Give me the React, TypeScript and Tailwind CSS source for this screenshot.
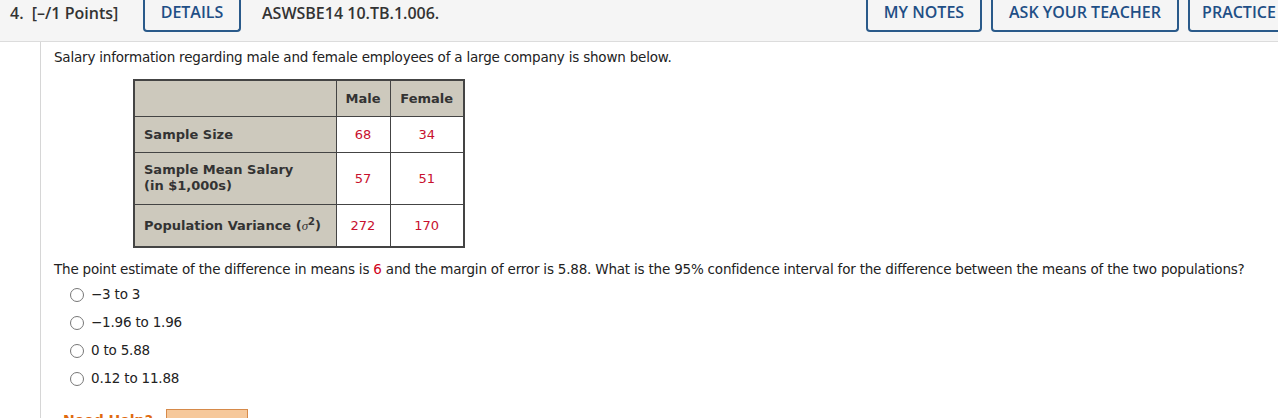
import React from "react";

const head = "font-['Open_Sans',sans-serif]";
const body = "font-['DejaVu_Sans',Verdana,sans-serif]";

const NavBtn = ({ label, className = "" }: { label: string; className?: string }) => (
  <div
    className={`flex shrink-0 items-end justify-center h-[33px] -mt-[1px] border-2 border-t-0 border-[#2a5a8a] rounded-b-[4px] pb-[6px] text-[#1f4f86] text-[16px] font-semibold whitespace-nowrap ${className}`}
  >
    {label}
  </div>
);

const options = ["\u22123 to 3", "\u22121.96 to 1.96", "0 to 5.88", "0.12 to 11.88"];

export default function App() {
  return (
    <div className="w-[1278px] h-[418px] overflow-hidden bg-white">
      <div className={`flex items-start h-[42px] overflow-hidden bg-[#f5f5f5] border-b border-[#dcdcdc] text-[#333] ${head}`}>
        <div className="shrink-0 pl-[10px] pt-[1px] text-[16px] font-semibold w-[143px] whitespace-nowrap">
          4.&nbsp;&nbsp;[–/1 Points]
        </div>
        <NavBtn label="DETAILS" className="w-[98px]" />
        <div className="pl-[21px] pt-[1px] text-[16px] font-semibold whitespace-nowrap">ASWSBE14 10.TB.1.006.</div>
        <div className="flex-1" />
        <div className="flex gap-[9px] mr-[-92px]">
          <NavBtn label="MY NOTES" className="w-[116px]" />
          <NavBtn label="ASK YOUR TEACHER" className="w-[188px]" />
          <NavBtn label="PRACTICE ANOTHER" className="w-[182px]" />
        </div>
      </div>
      <div className="ml-[40px] border-l border-[#d6d6d6] h-[376px] pl-[13px] pt-[5px]">
        <div className={`text-[13.5px] text-[#222] ${body} tracking-[-0.2px]`}>
          Salary information regarding male and female employees of a large company is shown below.
        </div>
        <table className={`ml-[79px] mt-[12px] border-collapse border-2 border-[#444] text-[13px] font-bold ${body} text-[#333]`}>
          <tbody>
            <tr className="h-[36px] bg-[#cdc9bd]">
              <td className="w-[202px] border border-[#444]"></td>
              <td className="w-[54px] border border-[#444] text-center">Male</td>
              <td className="w-[74px] border border-[#444] text-center">Female</td>
            </tr>
            <tr className="h-[36px]">
              <td className="bg-[#cdc9bd] border border-[#444] px-[9px]">Sample Size</td>
              <td className="border border-[#444] text-center text-[#c8102e] font-normal">68</td>
              <td className="border border-[#444] text-center text-[#c8102e] font-normal">34</td>
            </tr>
            <tr className="h-[52px]">
              <td className="bg-[#cdc9bd] border border-[#444] px-[9px] leading-[16px]">
                Sample Mean Salary
                <br />
                (in $1,000s)
              </td>
              <td className="border border-[#444] text-center text-[#c8102e] font-normal">57</td>
              <td className="border border-[#444] text-center text-[#c8102e] font-normal">51</td>
            </tr>
            <tr className="h-[43px]">
              <td className="bg-[#cdc9bd] border border-[#444] px-[9px] whitespace-nowrap">
                Population Variance (<span className="font-normal italic font-['Liberation_Serif',serif]">σ</span>
                <sup className="text-[10px]">2</sup>)
              </td>
              <td className="border border-[#444] text-center text-[#c8102e] font-normal">272</td>
              <td className="border border-[#444] text-center text-[#c8102e] font-normal">170</td>
            </tr>
          </tbody>
        </table>
        <div className={`mt-[11px] text-[13.5px] text-[#222] ${body} tracking-[-0.2px]`}>
          The point estimate of the difference in means is <span className="text-[#d0021b]">6</span> and the margin of
          error is 5.88. What is the 95% confidence interval for the difference between the means of the two
          populations?
        </div>
        <div className={`mt-[6px] flex flex-col gap-[10px] pl-[16px] text-[13.5px] text-[#222] ${body} tracking-[-0.2px]`}>
          {options.map((o) => (
            <label key={o} className="flex items-center gap-[7px] h-[18px]">
              <span className="w-[14px] h-[14px] rounded-full border border-[#777] bg-white" />
              <span>{o}</span>
            </label>
          ))}
        </div>
        <div className={`mt-[21px] flex items-start gap-[13px] pl-[9px] ${body}`}>
          <span className="text-[#e06a10] font-bold text-[14px] leading-[18px] mt-[2px]">Need Help?</span>
          <span className="w-[82px] h-[22px] border border-[#d68a4a] bg-[#f6c89a]" />
        </div>
      </div>
    </div>
  );
}
